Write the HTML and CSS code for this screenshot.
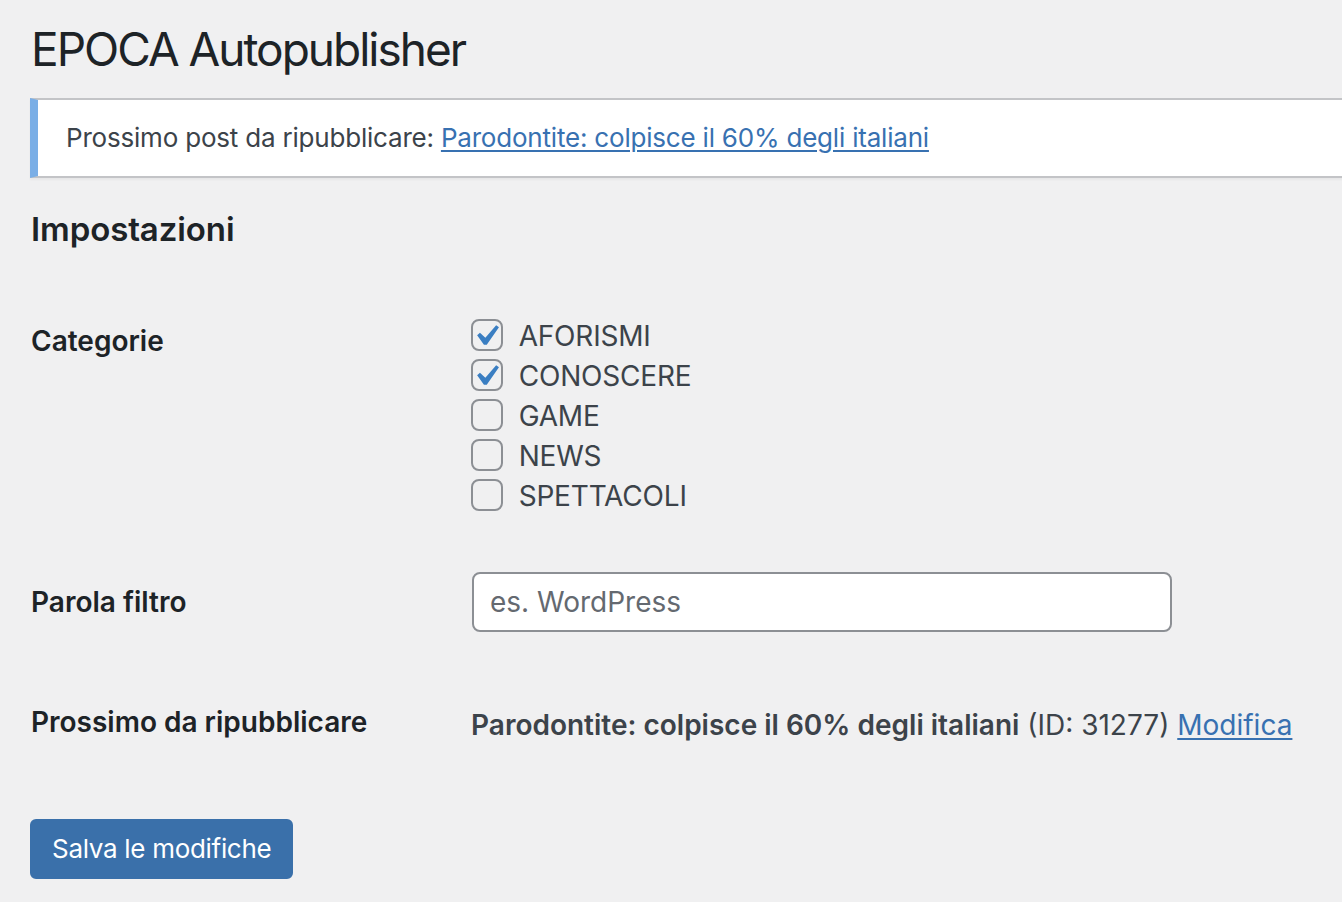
FILE: index.html
```html
<!DOCTYPE html>
<html lang="it">
<head>
<meta charset="utf-8">
<title>EPOCA Autopublisher</title>
<link rel="stylesheet" href="styles.css">
</head>
<body>
<div class="wrap">
  <h1 class="page-title">EPOCA Autopublisher</h1>
  <div class="notice">
    <p>Prossimo post da ripubblicare: <a href="#">Parodontite: colpisce il 60% degli italiani</a></p>
  </div>
  <h2 class="section-title">Impostazioni</h2>
  <div class="form-table">
    <div class="row row-cats">
      <div class="th">Categorie</div>
      <div class="td">
        <label class="check"><span class="cb checked"><svg viewBox="0 0 20 20"><path d="M14.83 4.89l1.34.94-5.81 8.38H9.02L5.78 9.67l1.34-1.25 2.57 2.4z"/></svg></span> AFORISMI</label>
        <label class="check"><span class="cb checked"><svg viewBox="0 0 20 20"><path d="M14.83 4.89l1.34.94-5.81 8.38H9.02L5.78 9.67l1.34-1.25 2.57 2.4z"/></svg></span> CONOSCERE</label>
        <label class="check"><span class="cb"></span> GAME</label>
        <label class="check"><span class="cb"></span> NEWS</label>
        <label class="check"><span class="cb"></span> SPETTACOLI</label>
      </div>
    </div>
    <div class="row">
      <div class="th">Parola filtro</div>
      <div class="td">
        <input class="text-input" type="text" placeholder="es. WordPress">
      </div>
    </div>
    <div class="row">
      <div class="th">Prossimo da ripubblicare</div>
      <div class="td td-next">
        <strong>Parodontite: colpisce il 60% degli italiani</strong> (ID: 31277) <a href="#">Modifica</a>
      </div>
    </div>
  </div>
  <p class="submit"><button class="button-primary" type="button">Salva le modifiche</button></p>
</div>
</body>
</html>
```

FILE: styles.css
```css
html, body {
  margin: 0;
  padding: 0;
  background: #f0f0f1;
  overflow: hidden;
}
body {
  font-family: Inter, "Noto Sans", sans-serif;
  color: #3c434a;
  width: 1342px;
  height: 902px;
}
.wrap {
  padding-left: 30px;
}
.page-title {
  margin: 0;
  padding: 20px 0 8px 1px;
  font-size: 46px;
  line-height: 1.3;
  font-weight: 400;
  color: #1d2327;
  letter-spacing: -2px;
}
.notice {
  margin: 10px -40px 4px 0;
  background: #fff;
  border: 2px solid #c3c4c7;
  border-left: 8px solid #7aaee6;
  box-shadow: 0 2px 2px rgba(0,0,0,.04);
  padding: 1px 24px 2px;
}
.notice p {
  margin: 13px 0;
  padding: 4px;
  font-size: 26px;
  line-height: 1.5;
  color: #3c434a;
  letter-spacing: -0.2px;
}
a {
  color: #3871b1;
  text-decoration: underline;
  text-underline-offset: 3px;
  text-decoration-thickness: 2px;
}
.section-title {
  margin: 30px 0 30px 1px;
  font-size: 33px;
  line-height: 1.3;
  font-weight: 600;
  color: #1d2327;
  letter-spacing: -0.1px;
}
.form-table {
  display: flex;
  flex-direction: column;
}
.row {
  display: flex;
  align-items: flex-start;
}
.th {
  width: 400px;
  flex: none;
  padding: 42px 20px 38px 1px;
  font-size: 28px;
  line-height: 1.3;
  font-weight: 600;
  color: #1d2327;
}
.td {
  padding: 30px 20px;
  font-size: 28px;
  line-height: 1.3;
}
.row-cats .td {
  padding: 32px 20px 29px 20px;
}
.check {
  box-sizing: border-box;
  display: flex;
  align-items: center;
  height: 40px;
  padding-top: 6px;
  white-space: pre;
  letter-spacing: -0.2px;
}
.cb {
  box-sizing: border-box;
  width: 32px;
  height: 32px;
  border: 2px solid #8c8f94;
  border-radius: 8px;
  background: transparent;
  margin-right: 8px;
  margin-top: -2px;
  position: relative;
  flex: none;
}
.cb svg {
  position: absolute;
  left: -8px;
  top: -6px;
  width: 42px;
  height: 42px;
  fill: #3a7ec2;
}
.text-input {
  box-sizing: border-box;
  width: 700px;
  height: 60px;
  margin: 0 0 0 1px;
  padding: 0 16px;
  border: 2px solid #8c8f94;
  border-radius: 8px;
  background: #fff;
  font-family: inherit;
  font-size: 28px;
  color: #2c3338;
  display: block;
}
.text-input::placeholder {
  color: #646970;
  opacity: 1;
}
.td-next {
  padding-top: 45px;
  color: #3c434a;
}
.td-next strong {
  font-weight: 600;
  color: #3c434a;
}
.submit {
  margin: 41px 0 0;
  padding: 0;
}
.button-primary {
  box-sizing: border-box;
  height: 60px;
  padding: 0 20px;
  border: 2px solid #3a70aa;
  border-radius: 6px;
  background: #3a70aa;
  color: #fff;
  font-family: inherit;
  font-size: 26px;
  line-height: 56px;
  letter-spacing: -0.3px;
  cursor: pointer;
}
```
